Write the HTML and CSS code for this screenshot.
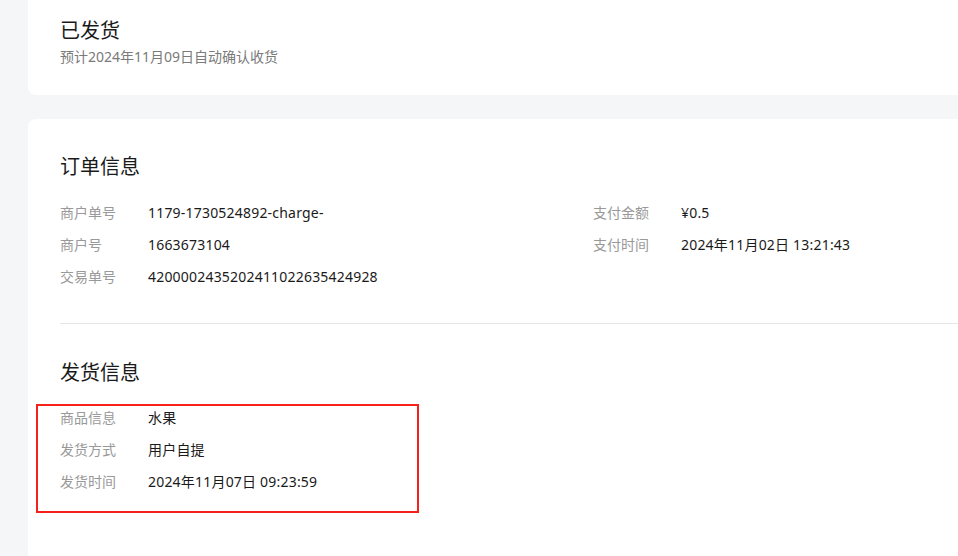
FILE: index.html
```html
<!DOCTYPE html>
<html lang="zh-CN">
<head>
<meta charset="utf-8">
<title>订单详情</title>
<link rel="stylesheet" href="styles.css">
</head>
<body>
<div class="page">
  <section class="card status-card">
    <h1 class="status-title">已发货</h1>
    <p class="status-sub">预计2024年11月09日自动确认收货</p>
  </section>
  <section class="card detail-card">
    <h2 class="section-title">订单信息</h2>
    <div class="info-grid">
      <div class="info-col">
        <div class="row"><span class="label">商户单号</span><span class="value">1179-1730524892-charge-</span></div>
        <div class="row"><span class="label">商户号</span><span class="value">1663673104</span></div>
        <div class="row"><span class="label">交易单号</span><span class="value">4200002435202411022635424928</span></div>
      </div>
      <div class="info-col">
        <div class="row"><span class="label">支付金额</span><span class="value">¥0.5</span></div>
        <div class="row"><span class="label">支付时间</span><span class="value">2024年11月02日 13:21:43</span></div>
      </div>
    </div>
    <hr class="divider">
    <h2 class="section-title second">发货信息</h2>
    <div class="info-col">
      <div class="row"><span class="label">商品信息</span><span class="value">水果</span></div>
      <div class="row"><span class="label">发货方式</span><span class="value">用户自提</span></div>
      <div class="row"><span class="label">发货时间</span><span class="value">2024年11月07日 09:23:59</span></div>
    </div>
  </section>
</div>
<div class="highlight"></div>
</body>
</html>
```

FILE: styles.css
```css
html, body {
  margin: 0;
  padding: 0;
  overflow: hidden;
}
body {
  background: #f5f6f7;
  font-family: "Noto Sans", "Noto Sans CJK SC", sans-serif;
  color: #1a1a1a;
  width: 958px;
  height: 556px;
  position: relative;
}
.page {
  width: 958px;
  overflow: hidden;
  padding-left: 28px;
  box-sizing: border-box;
  display: flex;
  flex-direction: column;
  gap: 24px;
}
.card {
  background: #fff;
  width: 950px;
  flex: none;
  box-sizing: border-box;
  padding-left: 32px;
}
.status-card {
  height: 95px;
  border-radius: 0 0 0 8px;
  padding-top: 17px;
}
.status-title {
  margin: 0;
  font-size: 20px;
  line-height: 28px;
  font-weight: 400;
}
.status-sub {
  margin: 2px 0 0;
  font-size: 14px;
  line-height: 20px;
  color: #7a7a7a;
}
.detail-card {
  border-radius: 8px 0 0 8px;
  padding-top: 34px;
  height: 460px;
}
.section-title {
  margin: 0 0 15px;
  font-size: 20px;
  line-height: 28px;
  font-weight: 400;
}
.section-title.second {
  margin-top: 35px;
  margin-bottom: 14px;
}
.info-grid {
  display: grid;
  grid-template-columns: 533px 1fr;
}
.row {
  display: flex;
  height: 32px;
  align-items: center;
  font-size: 14px;
}
.label {
  width: 88px;
  flex: none;
  color: #999;
}
.value {
  color: #1a1a1a;
  letter-spacing: 0.2px;
}
.divider {
  border: 0;
  border-top: 1px solid #e6e6e6;
  margin: 31px 0 0;
}
.highlight {
  position: absolute;
  left: 36px;
  top: 404px;
  width: 379px;
  height: 105px;
  border: 2px solid #f5211a;
}
```
